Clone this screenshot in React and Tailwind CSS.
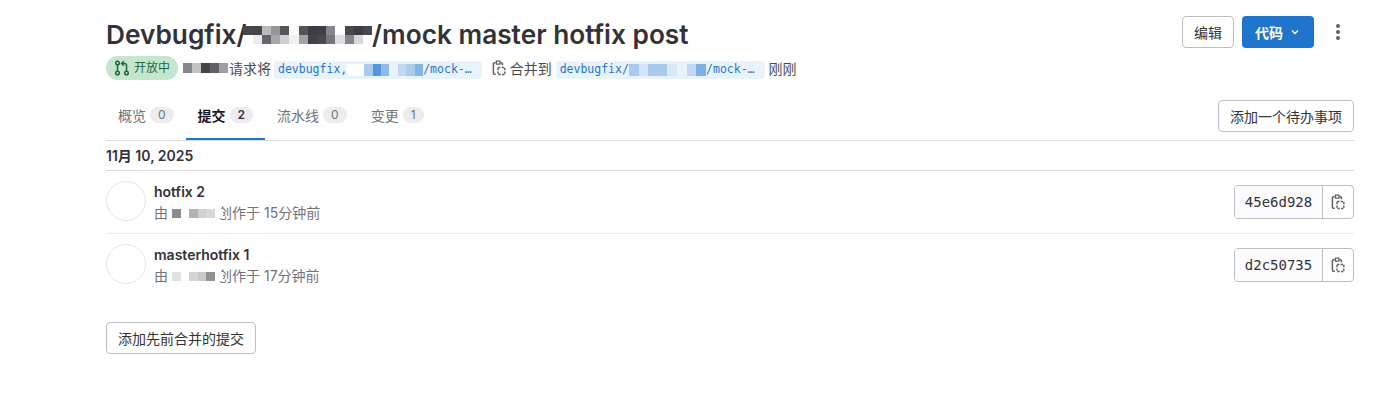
const font = "font-['Inter','Noto_Sans_CJK_SC',sans-serif]";
const mono = "font-['DejaVu_Sans_Mono','Noto_Sans_CJK_SC',monospace]";

function ClipboardIcon({ className }) {
  return (
    <svg className={className} width="16" height="16" viewBox="0 0 16 16" fill="none" stroke="currentColor" strokeWidth="1.5">
      <path d="M4.6 2.8H3.4a1 1 0 0 0-1 1v9.4a1 1 0 0 0 1 1h1.4" />
      <path d="M5.4 1.2h3.6v3H5.4z" strokeWidth="1.3" />
      <path d="M9.6 2.8h.8a1 1 0 0 1 1 1v1.4" />
      <path d="M7 7.4h6.8v7.2H7z" strokeDasharray="2.4 1.2" />
    </svg>
  );
}

function MergeIcon() {
  return (
    <svg width="16" height="16" viewBox="0 0 16 16" fill="none" stroke="currentColor" strokeWidth="1.5" className="text-[#24663b]">
      <circle cx="3.5" cy="3" r="1.8" />
      <circle cx="3.5" cy="13" r="1.8" />
      <circle cx="12.5" cy="13" r="1.8" />
      <path d="M3.5 5v6M12.5 11V5.5a2 2 0 0 0-2-2H8" />
      <path d="M9.8 1.2 7.6 3.5l2.2 2.3" />
    </svg>
  );
}

// one row of blocks standing in for blurred-out text
function Mosaic({ rows, cell, className = "" }) {
  return (
    <span className={`relative z-10 inline-flex flex-col align-middle ${className}`}>
      {rows.map((row, i) => (
        <span key={i} className="flex">
          {row.map((c, j) => (
            <span key={j} className={`${cell} ${c}`} />
          ))}
        </span>
      ))}
    </span>
  );
}

const titleRows = [
  ["bg-[#46464c]", "bg-[#44444a]", "bg-[#b9b9bc]", "bg-[#96969a]", "bg-[#55555a]", "bg-white", "bg-[#535358]", "bg-[#3c3c43]", "bg-[#3f3f45]", "bg-[#88888c]", "bg-white", "bg-[#48484e]", "bg-[#3d3d44]", "bg-[#47474c]"],
  ["bg-white", "bg-[#ececed]", "bg-[#66666a]", "bg-[#a8a8ab]", "bg-[#cfcfd1]", "bg-[#f0f0f1]", "bg-[#a3a3a6]", "bg-[#414147]", "bg-[#48484e]", "bg-[#77777b]", "bg-[#dedee0]", "bg-[#85858a]", "bg-[#d8d8da]", "bg-white"],
];

const authorRows = [["bg-[#87878a]", "bg-[#c4c4c6]", "bg-[#454549]", "bg-[#616165]", "bg-[#a0a0a3]"]];
const sourceRows = [["bg-white", "bg-white", "bg-[#a9cbee]", "bg-[#5597dc]", "bg-[#8fbbe8]", "bg-[#e9f3fc]", "bg-[#c0d9f3]", "bg-[#acccee]", "bg-[#85b4e6]"]];
const targetRows = [["bg-[#a7caee]", "bg-[#d2e4f6]", "bg-[#a9cbee]", "bg-[#a9cbee]", "bg-[#d8e7f7]", "bg-[#e9f3fc]", "bg-[#c0d9f3]", "bg-[#7fb0e4]"]];

function BranchChip({ left, rows, cell }) {
  return (
    <span className={`${mono} inline-flex h-[18px] items-center rounded-[4px] bg-[#e9f3fc] pl-1 pr-[10px] text-[11.5px] text-[#1f75cb]`}>
      {left}
      <Mosaic rows={rows} cell={cell} />
      /mock-…
    </span>
  );
}

function Tab({ label, count, active }) {
  return (
    <div className={`flex h-[48px] items-center gap-1 border-b-2 px-3 text-[14px] ${active ? "border-[#1f75cb] font-semibold text-[#18171d]" : "border-transparent text-[#737278]"}`}>
      {label}
      <span className={`flex h-[16px] items-center justify-center rounded-full bg-[#ececef] px-2 text-[12px] ${active ? "font-semibold text-[#333238]" : "text-[#737278]"}`}>
        {count}
      </span>
    </div>
  );
}

function CommitRow({ title, rows, time, sha, last }) {
  return (
    <div className={`flex items-start py-[10px] ${last ? "" : "border-b border-[#ececef]"}`}>
      <div className="h-[40px] w-[40px] shrink-0 rounded-full border border-[#e5e5e8] bg-white" />
      <div className="ml-2 min-w-0 flex-1 pt-[1px]">
        <div className="text-[14px] leading-[20px] font-semibold text-[#333238]">{title}</div>
        <div className="mt-[1px] flex items-center text-[14px] leading-[20px] text-[#737278]">
          由 <span className="ml-1 flex"><Mosaic rows={rows} cell="h-[9px] w-[8.5px]" /></span>
          <span className="-ml-[5px]">创作于 {time}</span>
        </div>
      </div>
      <div className="mt-[4px] flex h-[34px] items-stretch overflow-hidden rounded-[4px] border border-[#bfbfc3]">
        <span className={`${mono} flex w-[87px] items-center justify-center bg-[#fbfafd] text-[14px] text-[#333238]`}>{sha}</span>
        <span className="flex w-[31px] items-center justify-center border-l border-[#bfbfc3] text-[#626168]">
          <ClipboardIcon />
        </span>
      </div>
    </div>
  );
}

function Button({ children, className = "" }) {
  return (
    <button className={`flex h-[32px] items-center justify-center rounded-[4px] border border-[#bfbfc3] bg-white text-[14px] text-[#333238] ${className}`}>
      {children}
    </button>
  );
}

export default function App() {
  return (
    <div className={`${font} h-[417px] w-[1394px] overflow-hidden bg-white pl-[106px] pr-[40px] text-[#333238]`}>
      <div className="flex items-start justify-between pt-[16px]">
        <div className="min-w-0">
          <h1 className="flex h-[38px] items-center text-[26.25px] font-semibold text-[#333238]">
            Devbugfix/
            <Mosaic rows={titleRows} cell="h-[9px] w-[9.2px]" className="-ml-[3px]" />
            /mock master hotfix post
          </h1>
          <div className="mt-[2px] flex h-[24px] items-center text-[14px] text-[#4c4b51]">
            <span className="flex h-[24px] w-[72px] items-center justify-center gap-1 rounded-full bg-[#c3e6cd] text-[12px] text-[#24663b]">
              <MergeIcon />开放中
            </span>
            <span className="ml-[5px] flex items-center">
              <Mosaic rows={authorRows} cell="h-[10px] w-[9px]" />
            </span>
            <span className="ml-[1px]">请求将</span>
            <span className="ml-[3px]">
              <BranchChip left="devbugfix," rows={sourceRows} cell="h-[12px] w-[8.45px]" />
            </span>
            <ClipboardIcon className="ml-[9px] text-[#626168]" />
            <span className="ml-[3px]">合并到</span>
            <span className="ml-1">
              <BranchChip left="devbugfix/" rows={targetRows} cell="h-[12px] w-[9.65px]" />
            </span>
            <span className="ml-1">刚刚</span>
          </div>
        </div>

        <div className="mr-[6px] flex items-center">
          <Button className="w-[52px]">编辑</Button>
          <button className="ml-2 flex h-[32px] w-[72px] items-center justify-center gap-1.5 rounded-[4px] bg-[#1f75cb] text-[14px] font-semibold text-white">
            代码
            <svg width="12" height="12" viewBox="0 0 16 16" fill="none" stroke="currentColor" strokeWidth="1.8">
              <path d="m4 6 4 4 4-4" />
            </svg>
          </button>
          <span className="ml-[14px] flex h-[32px] w-[20px] flex-col items-center justify-center gap-[2.5px]">
            <span className="h-[3.5px] w-[3.5px] rounded-full bg-[#626168]" />
            <span className="h-[3.5px] w-[3.5px] rounded-full bg-[#626168]" />
            <span className="h-[3.5px] w-[3.5px] rounded-full bg-[#626168]" />
          </span>
        </div>
      </div>

      <div className="mt-[12px] flex items-center justify-between border-b border-[#dcdcde]">
        <div className="flex">
          <Tab label="概览" count="0" />
          <Tab label="提交" count="2" active />
          <Tab label="流水线" count="0" />
          <Tab label="变更" count="1" />
        </div>
        <Button className="w-[136px]">添加一个待办事项</Button>
      </div>

      <div className="flex h-[30px] items-center border-b border-[#dcdcde] text-[14px] font-semibold text-[#333238]">
        11月 10, 2025
      </div>

      <CommitRow
        title="hotfix 2"
        rows={[["bg-[#8d8d90]", "bg-white", "bg-[#b3b3b5]", "bg-[#d0d0d2]", "bg-[#d9d9da]", "bg-white"]]}
        time="15分钟前"
        sha="45e6d928"
      />
      <CommitRow
        title="masterhotfix 1"
        rows={[["bg-[#e2e2e3]", "bg-white", "bg-[#d5d5d6]", "bg-[#c9c9cb]", "bg-[#929295]", "bg-white"]]}
        time="17分钟前"
        sha="d2c50735"
        last
      />

      <Button className="mt-[26px] w-[150px]">添加先前合并的提交</Button>
    </div>
  );
}
